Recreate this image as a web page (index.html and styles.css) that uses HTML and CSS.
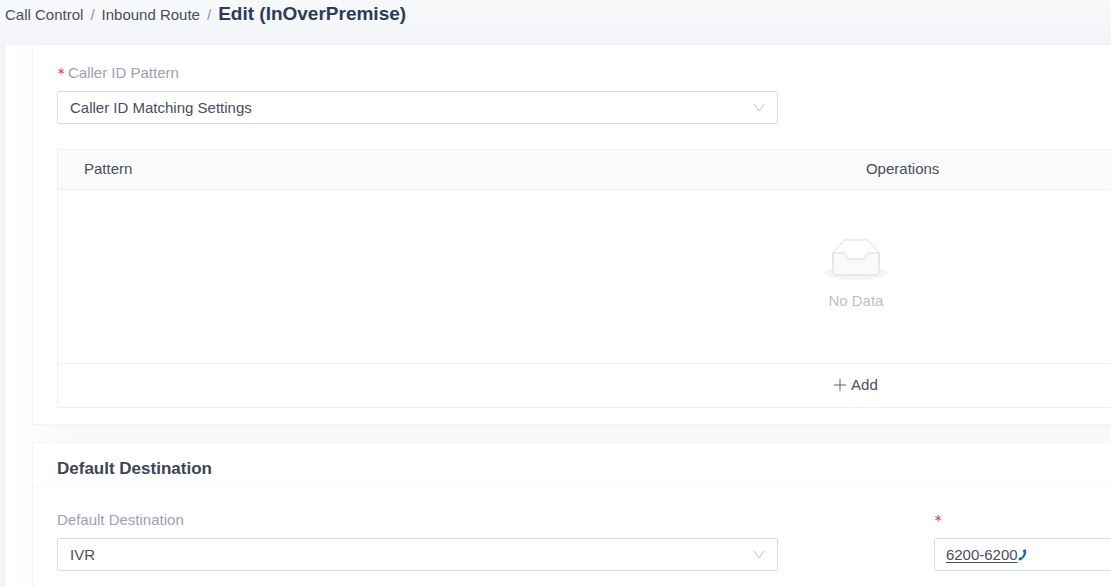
FILE: index.html
```html
<!DOCTYPE html>
<html lang="en">
<head>
  <meta charset="UTF-8">
  <title>Edit Inbound Route</title>
  <meta name="viewport" content="width=device-width, initial-scale=1.0">
  <link rel="stylesheet" href="styles.css">
</head>
<body>

  <!-- Breadcrumb -->
  <nav class="breadcrumb">
    <a href="#">Call Control</a>
    <span class="separator">/</span>
    <a href="#">Inbound Route</a>
    <span class="separator">/</span>
    <h1>Edit (InOverPremise)</h1>
  </nav>

  <main class="content">

    <!-- Caller ID -->
    <section class="card card-top">
      <div class="card-body">
        <div class="form-row">
          <div class="field">
            <label for="callerPattern"><span class="required">*</span>Caller ID Pattern</label>
            <div class="select-box">
              <select id="callerPattern">
                <option>Caller ID Matching Settings</option>
              </select>
              <svg class="arrow" viewBox="0 0 12 12" aria-hidden="true"><path d="M1 2 L6 9 L11 2"/></svg>
            </div>
          </div>
        </div>

        <table class="pattern-table">
          <thead>
            <tr>
              <th class="col-pattern">Pattern</th>
              <th>Operations</th>
            </tr>
          </thead>
          <tbody>
            <tr>
              <td colspan="2" class="empty">
                <svg width="64" height="41" viewBox="0 0 64 41" aria-hidden="true">
                  <ellipse cx="32" cy="33" rx="32" ry="7" fill="#f5f5f5"/>
                  <g fill-rule="nonzero" stroke="#d9d9d9">
                    <path fill="#fff" d="M55 12.760L44.854 1.258C44.367.474 43.656 0 42.907 0H21.093c-.749 0-1.460.474-1.947 1.257L9 12.761V22h46v-9.240z"/>
                    <path fill="#fafafa" d="M41.613 15.931c0-1.605.994-2.930 2.227-2.931H55v18.137C55 33.260 53.680 35 52.050 35h-40.100C10.320 35 9 33.259 9 31.137V13h11.160c1.233 0 2.227 1.323 2.227 2.928v.022c0 1.605 1.005 2.901 2.237 2.901h14.752c1.232 0 2.237-1.308 2.237-2.913v-.007z"/>
                  </g>
                </svg>
                <p>No Data</p>
              </td>
            </tr>
          </tbody>
          <tfoot>
            <tr>
              <td colspan="2">
                <button type="button" class="add-btn">
                  <svg width="12" height="12" viewBox="0 0 12 12" aria-hidden="true"><path d="M6 0V12M0 6H12"/></svg>
                  Add
                </button>
              </td>
            </tr>
          </tfoot>
        </table>
      </div>
    </section>

    <!-- Default Destination -->
    <section class="card">
      <h2 class="card-title">Default Destination</h2>
      <div class="card-body">
        <div class="form-row">
          <div class="field">
            <label for="destination">Default Destination</label>
            <div class="select-box">
              <select id="destination">
                <option>IVR</option>
              </select>
              <svg class="arrow" viewBox="0 0 12 12" aria-hidden="true"><path d="M1 2 L6 9 L11 2"/></svg>
            </div>
          </div>
          <div class="field">
            <div class="label"><span class="required">*</span></div>
            <div class="select-box number-box">
              <a href="tel:6200-6200">6200-6200</a>
              <svg width="9" height="12" viewBox="0 0 9 12" aria-hidden="true"><path d="M5 1.200 Q6.500 0 8 .6 Q9 5 6 8.500 Q4 11 1.200 11.500 Q.2 10.500 .8 9 Q2.200 8 3.500 8.500 Q5.500 6.500 5.800 4 Q4.800 3 5 1.200 Z"/></svg>
            </div>
          </div>
        </div>
      </div>
    </section>

  </main>

</body>
</html>
```
FILE: styles.css
```css
* {
  box-sizing: border-box;
}

body {
  margin: 0;
  min-height: 100vh;
  font-family: "Liberation Sans", Arial, sans-serif;
  font-size: 15px;
  line-height: 20px;
  color: #454f5e;
  background: #f4f5f8;
  overflow: hidden;
}

.breadcrumb {
  display: flex;
  align-items: baseline;
  gap: 7px;
  height: 45px;
  padding: 2px 5px 0;
  background: linear-gradient(#f8f9fb, #f4f5f8);
}

.breadcrumb a {
  color: #454f5e;
  text-decoration: none;
}

.separator {
  color: #8c94a3;
}

.breadcrumb h1 {
  margin: 0;
  font-size: 19px;
  line-height: 24px;
  color: #2c3b5a;
}

/* the form is wider than the window and runs off to the right */
.content {
  width: 153%;
  margin-left: 6px;
  padding: 0 26px;
  background: linear-gradient(90deg, #fff, #fafafb 70px);
}

.card {
  margin-bottom: 17px;
  background: #fff;
  border: 1px solid #f3f4f6;
  border-radius: 2px;
  box-shadow: 0 0 20px rgba(60, 80, 120, 0.02);
}

.card-top {
  border-top: none;
  border-radius: 0;
}

.card-title {
  margin: 0;
  padding: 14px 24px 5px;
  font-size: 17px;
  line-height: 24px;
  color: #3a4657;
  border-bottom: 1px solid #f6f6f8;
}

.card-body {
  padding: 18px 24px 16px;
}

.card:last-child .card-body {
  padding-top: 23px;
}

.form-row {
  display: grid;
  grid-template-columns: 1fr 1fr;
  gap: 156px;
}

label,
.label {
  display: flex;
  height: 20px;
  margin-bottom: 8px;
  color: #9b9fb5;
}

.required {
  width: 11px;
  font-family: "DejaVu Sans Mono", monospace;
  font-size: 14px;
  color: #f5222d;
}

.select-box {
  position: relative;
  height: 33px;
  border: 1px solid #d9dae4;
  border-radius: 2px;
  background: #fff;
}

.select-box select {
  width: 100%;
  height: 100%;
  padding: 0 32px 0 12px;
  font: inherit;
  color: inherit;
  border: none;
  background: none;
  appearance: none;
}

.arrow {
  position: absolute;
  top: 10px;
  right: 12px;
  width: 12px;
  height: 12px;
  fill: none;
  stroke: #bfbfbf;
  pointer-events: none;
}

.number-box {
  display: flex;
  align-items: center;
  padding: 0 11px;
}

.number-box a {
  color: inherit;
  text-underline-offset: 2px;
}

.number-box svg {
  fill: #0b6cbd;
}

.pattern-table {
  width: 100%;
  margin-top: 25px;
  border: 1px solid #f0f0f4;
  border-radius: 2px;
  border-spacing: 0;
}

.pattern-table th {
  height: 40px;
  padding: 0 26px 2px;
  font-weight: normal;
  text-align: left;
  background: #fbfbfb;
  border-bottom: 1px solid #f0f0f2;
}

.col-pattern {
  width: 49%;
}

.pattern-table td {
  padding: 0;
  text-align: center;
}

.pattern-table .empty {
  height: 173px;
  padding-bottom: 2px;
  color: #bfbfbf;
}

.empty svg {
  display: block;
  margin: 0 auto 10px;
  overflow: visible;
}

.empty p {
  margin: 0;
}

.pattern-table tfoot td {
  height: 44px;
  padding-bottom: 2px;
  border-top: 1px solid #f0f0f4;
}

.add-btn {
  display: inline-flex;
  align-items: center;
  gap: 5px;
  padding: 4px 8px;
  font: inherit;
  color: inherit;
  border: none;
  background: none;
  cursor: pointer;
}

.add-btn svg {
  stroke: #5b6675;
}
```
